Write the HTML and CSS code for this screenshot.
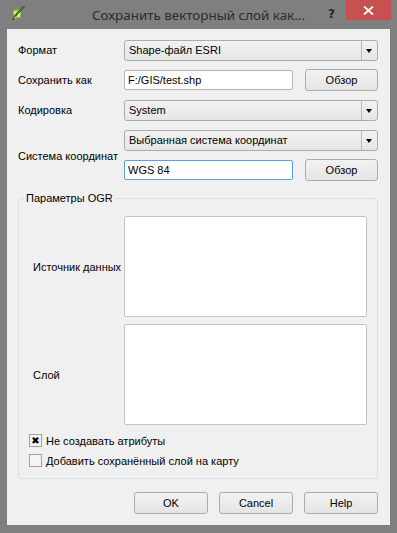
FILE: index.html
```html
<!DOCTYPE html>
<html lang="ru">
<head>
<meta charset="utf-8">
<title>Сохранить векторный слой как...</title>
<link rel="stylesheet" href="styles.css">
</head>
<body>
<div class="window">
  <div class="titlebar">
    <div class="tb-left">
      <svg class="app-icon" width="14" height="16" viewBox="0 0 14 16">
        <path d="M2 6 L7 4 L8 12 L3 14 Z" fill="#e8e46a" stroke="#9a9a2a" stroke-width="0.8"/>
        <path d="M6 5 L10 7 L9 13 L6 12 Z" fill="#f4f08a" stroke="#9a9a2a" stroke-width="0.8"/>
        <path d="M12.5 1 L13.5 2 L5 11 L3.5 11.5 L4 10 Z" fill="#2f9a2f" stroke="#136013" stroke-width="0.8"/>
        <path d="M3.5 11.5 L2 15" stroke="#136013" stroke-width="1.2"/>
      </svg>
    </div>
    <div class="title">Сохранить векторный слой как...</div>
    <div class="tb-right">
      <span class="help-q">?</span>
      <span class="close-btn">
        <svg width="11" height="9" viewBox="0 0 11 9"><path d="M1 0.5 L10 8.5 M10 0.5 L1 8.5" stroke="#fff" stroke-width="1.8"/></svg>
      </span>
    </div>
  </div>
  <div class="client">
    <div class="form">
      <label class="lbl">Формат</label>
      <div class="combo span2"><span class="combo-text">Shape-файл ESRI</span><span class="combo-arrow"></span></div>

      <label class="lbl">Сохранить как</label>
      <div class="field"><div class="input">F:/GIS/test.shp</div></div>
      <button class="btn">Обзор</button>

      <label class="lbl">Кодировка</label>
      <div class="combo span2"><span class="combo-text">System</span><span class="combo-arrow"></span></div>

      <label class="lbl lbl-tall">Система координат</label>
      <div class="combo span2"><span class="combo-text">Выбранная система координат</span><span class="combo-arrow"></span></div>
      <div class="field"><div class="input focused">WGS 84</div></div>
      <button class="btn">Обзор</button>
    </div>

    <fieldset class="group">
      <legend>Параметры OGR</legend>
      <div class="group-grid">
        <label class="lbl2">Источник данных</label>
        <div class="textarea"></div>
        <label class="lbl2">Слой</label>
        <div class="textarea"></div>
      </div>
      <div class="checks">
        <div class="check"><span class="box checked">✖</span><span>Не создавать атрибуты</span></div>
        <div class="check"><span class="box"></span><span>Добавить сохранённый слой на карту</span></div>
      </div>
    </fieldset>

    <div class="buttons">
      <button class="btn">OK</button>
      <button class="btn">Cancel</button>
      <button class="btn">Help</button>
    </div>
  </div>
</div>
</body>
</html>
```

FILE: styles.css
```css
* { box-sizing: border-box; }
html, body { margin: 0; padding: 0; }
body {
  width: 397px;
  height: 533px;
  background: #7f7f7f;
  font-family: "Liberation Sans", Arial, sans-serif;
  font-size: 11px;
  color: #000;
  overflow: hidden;
}
.window {
  display: flex;
  flex-direction: column;
  height: 533px;
  padding: 0 7px 8px 7px;
}
.titlebar {
  height: 29px;
  display: grid;
  grid-template-columns: 1fr auto 1fr;
  align-items: start;
  margin: 0 -7px;
}
.tb-left { padding: 5px 0 0 11px; }
.app-icon { display: block; }
.title {
  font-family: "Noto Sans", "Open Sans", sans-serif;
  font-size: 13.4px;
  color: #2b2b2b;
  line-height: 16px;
  padding-top: 7px;
}
.tb-right {
  display: flex;
  justify-content: flex-end;
  align-items: flex-start;
  padding-right: 6px;
}
.help-q {
  font-family: "DejaVu Sans", sans-serif;
  font-weight: bold;
  font-size: 12px;
  color: #262626;
  padding-top: 7px;
  margin-right: 11px;
}
.close-btn {
  width: 45px;
  height: 20px;
  background: #c75050;
  display: flex;
  align-items: center;
  justify-content: center;
}
.close-btn svg { display: block; margin-top: 1px; }

.client {
  flex: 1;
  background: #f0f0f0;
  padding: 10px 12px 11px 11px;
  display: flex;
  flex-direction: column;
}
.form {
  display: grid;
  grid-template-columns: 106px 181px 73px;
  grid-auto-rows: 22px;
  row-gap: 8px;
  align-items: center;
}
.lbl-tall { grid-row: span 2; align-self: center; padding-top: 2px; }
.span2 { grid-column: 2 / 4; }
.combo {
  height: 21px;
  border: 1px solid #acacac;
  border-radius: 3px;
  background: linear-gradient(#f2f2f2, #e6e6e6);
  display: flex;
  align-items: center;
}
.combo-text { flex: 1; padding-left: 4px; }
.combo-arrow {
  width: 16px;
  height: 19px;
  border-left: 1px solid #b9b9b9;
  position: relative;
}
.combo-arrow::after {
  content: "";
  position: absolute;
  left: 4px;
  top: 8px;
  border-left: 3.5px solid transparent;
  border-right: 3.5px solid transparent;
  border-top: 4px solid #000;
}
.field { padding-right: 12px; }
.input {
  height: 20px;
  background: #fff;
  border: 1px solid #b5b5b5;
  border-radius: 2px;
  padding-left: 3px;
  line-height: 18px;
}
.input.focused { border-color: #5a9ee0; }
.btn {
  font-family: "Liberation Sans", Arial, sans-serif;
  font-size: 11px;
  color: #000;
  height: 22px;
  border: 1px solid #acacac;
  border-radius: 3px;
  background: linear-gradient(#f2f2f2, #e5e5e5);
  padding: 0;
  margin: 0;
}
.form .btn { width: 73px; }

.group {
  margin: 11px 0 0 0;
  border: 1px solid #d5dfe5;
  border-radius: 3px;
  padding: 0 10px 11px 10px;
  min-width: 0;
}
.group legend {
  padding: 0 2px;
  margin-left: -5px;
  line-height: 13px;
}
.group-grid {
  display: grid;
  grid-template-columns: 91px 1fr;
  grid-auto-rows: 101px;
  row-gap: 7px;
  align-items: center;
  margin-top: 11px;
  padding-left: 4px;
}
.textarea {
  height: 101px;
  background: #fff;
  border: 1px solid #c4c4c4;
  border-radius: 2px;
}
.checks {
  margin-top: 9px;
  display: flex;
  flex-direction: column;
  gap: 7px;
}
.check {
  display: flex;
  align-items: center;
  height: 13px;
}
.box {
  width: 13px;
  height: 13px;
  border: 1px solid #a0a0a0;
  background: #f4f4f4;
  margin-right: 4px;
  display: flex;
  align-items: center;
  justify-content: center;
  font-family: "DejaVu Sans", sans-serif;
  font-size: 10px;
  line-height: 1;
  color: #000;
}
.buttons {
  margin-top: 13px;
  display: flex;
  justify-content: flex-end;
  gap: 11px;
}
.buttons .btn { width: 74px; }
```
